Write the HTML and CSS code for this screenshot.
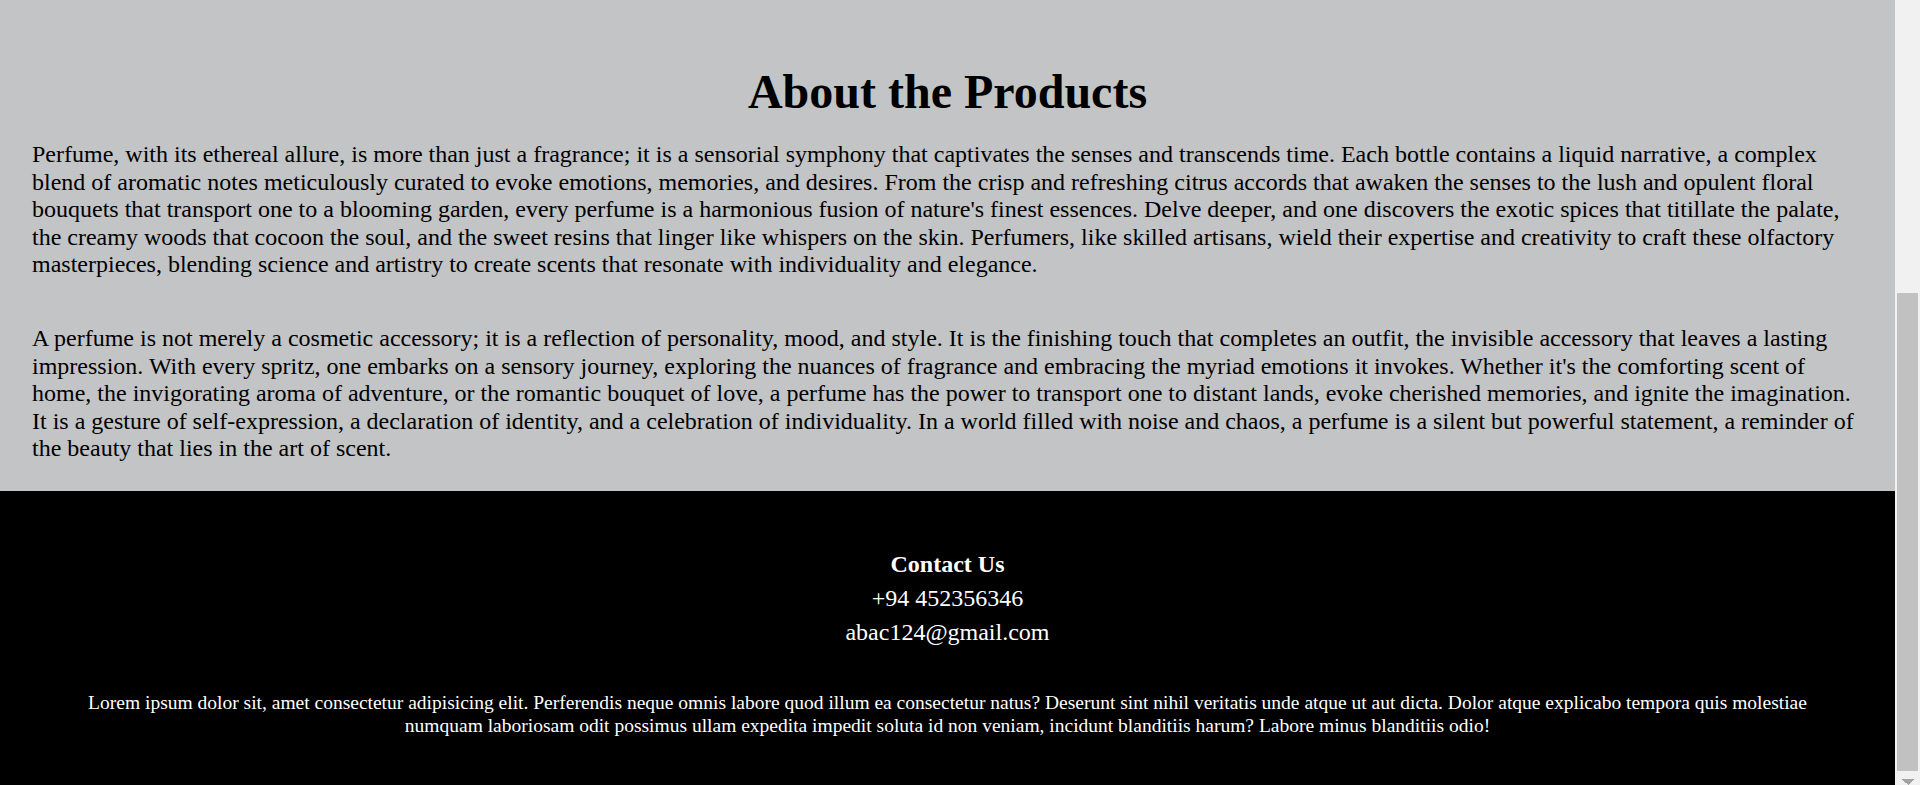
FILE: index.html
```html
<!DOCTYPE html>
<html lang="en">
<head>
<meta charset="utf-8">
<title>About the Products</title>
<link rel="stylesheet" href="styles.css">
</head>
<body>
<main class="page">
  <section class="about">
    <h1 class="about-title">About the Products</h1>
    <p class="about-text">Perfume, with its ethereal allure, is more than just a fragrance; it is a sensorial symphony that captivates the senses and transcends time. Each bottle contains a liquid narrative, a complex blend of aromatic notes meticulously curated to evoke emotions, memories, and desires. From the crisp and refreshing citrus accords that awaken the senses to the lush and opulent floral bouquets that transport one to a blooming garden, every perfume is a harmonious fusion of nature's finest essences. Delve deeper, and one discovers the exotic spices that titillate the palate, the creamy woods that cocoon the soul, and the sweet resins that linger like whispers on the skin. Perfumers, like skilled artisans, wield their expertise and creativity to craft these olfactory masterpieces, blending science and artistry to create scents that resonate with individuality and elegance.</p>
    <p class="about-text about-text-second">A perfume is not merely a cosmetic accessory; it is a reflection of personality, mood, and style. It is the finishing touch that completes an outfit, the invisible accessory that leaves a lasting impression. With every spritz, one embarks on a sensory journey, exploring the nuances of fragrance and embracing the myriad emotions it invokes. Whether it's the comforting scent of home, the invigorating aroma of adventure, or the romantic bouquet of love, a perfume has the power to transport one to distant lands, evoke cherished memories, and ignite the imagination. It is a gesture of self-expression, a declaration of identity, and a celebration of individuality. In a world filled with noise and chaos, a perfume is a silent but powerful statement, a reminder of the beauty that lies in the art of scent.</p>
  </section>
  <footer class="footer">
    <div class="contact">
      <h3 class="contact-title">Contact Us</h3>
      <p class="contact-line">+94 452356346</p>
      <p class="contact-line">abac124@gmail.com</p>
    </div>
    <p class="footer-note">Lorem ipsum dolor sit, amet consectetur adipisicing elit. Perferendis neque omnis labore quod illum ea consectetur natus? Deserunt sint nihil veritatis unde atque ut aut dicta. Dolor atque explicabo tempora quis molestiae numquam laboriosam odit possimus ullam expedita impedit soluta id non veniam, incidunt blanditiis harum? Labore minus blanditiis odio!</p>
  </footer>
</main>
</body>
</html>
```
FILE: styles.css
```css
/* The page is shown scrolled to its end; the strip on the right
   reproduces the browser's scroll track, thumb and down arrow. */
html {
  background-color: #f1f1f1;
  background-image:
    conic-gradient(from -45deg at 50% 100%, #a3a3a3 90deg, transparent 0),
    linear-gradient(#c1c1c1, #c1c1c1);
  background-repeat: no-repeat;
  background-size: 12px 6px, 21px 478px;
  background-position: right 6px top 779px, right 2px top 293px;
  min-height: 100%;
}

body {
  margin: 0 25px 0 0;
  font-family: "Liberation Serif", "Times New Roman", serif;
  color: #000;
}

.page {
  display: flex;
  flex-direction: column;
}

.about {
  background: #c3c4c6;
  padding: 64px 32px 28px;
}

.about-title {
  margin: 0;
  font-size: 48px;
  line-height: 56px;
  font-weight: bold;
  text-align: center;
}

.about-text {
  margin: 21px 0 0;
  font-size: 24px;
  line-height: 27.6px;
}

.about-text-second {
  margin-top: 46px;
}

.footer {
  background: #000;
  color: #fff;
  padding: 56px 50px 48px;
  text-align: center;
}

.contact {
  display: flex;
  flex-direction: column;
  align-items: center;
}

.contact-title {
  margin: 0;
  font-size: 24px;
  line-height: 34px;
  font-weight: bold;
}

.contact-line {
  margin: 0;
  font-size: 24px;
  line-height: 34px;
}

.footer-note {
  margin: 42px 0 0;
  font-size: 19.5px;
  line-height: 23px;
}
```
